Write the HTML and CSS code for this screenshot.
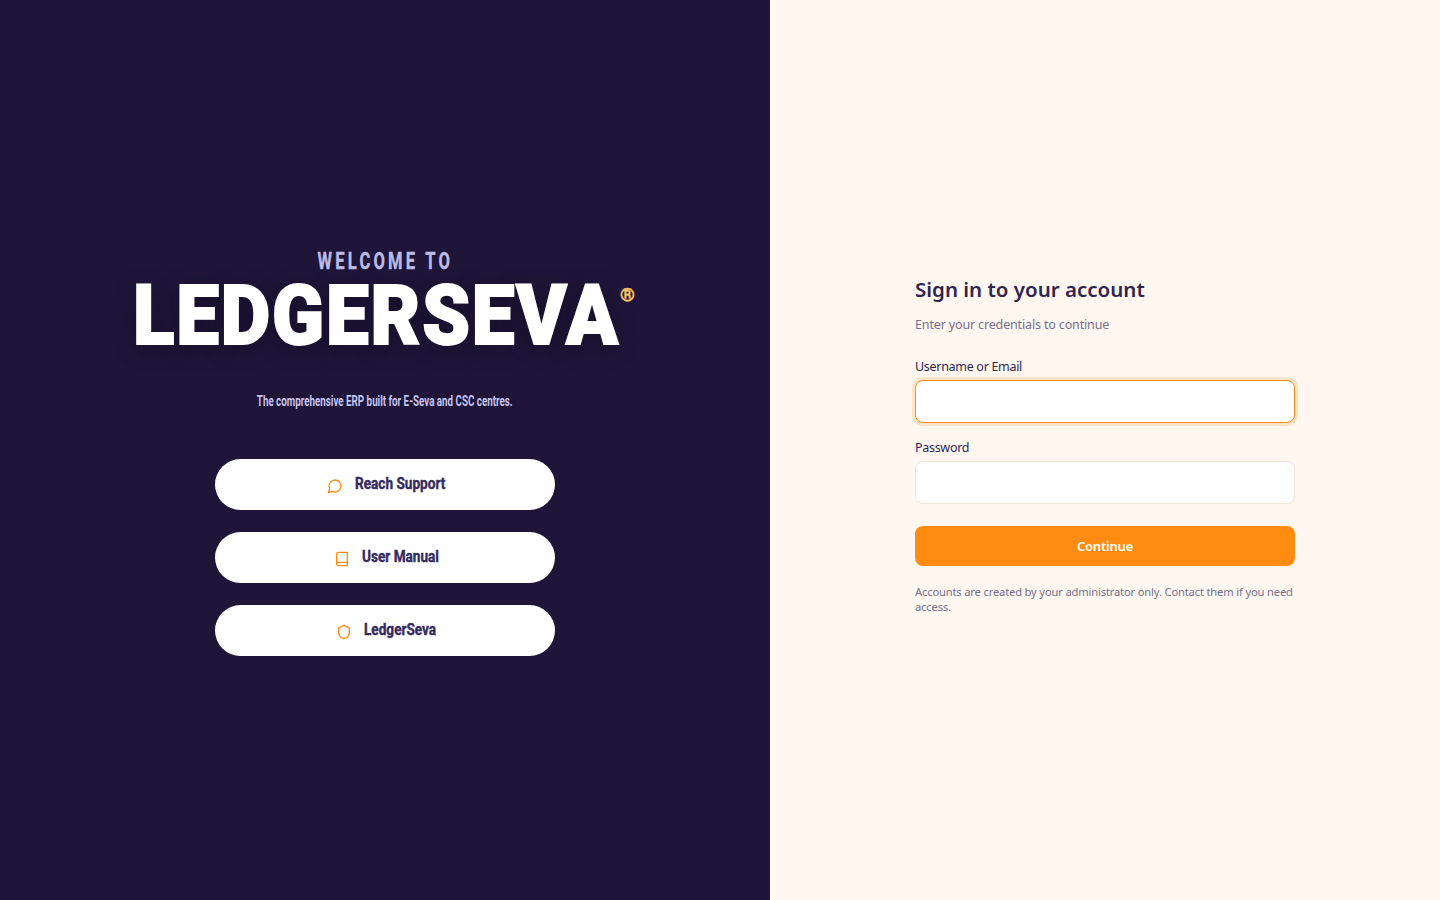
FILE: index.html
```html
<!DOCTYPE html>
<html lang="en">
<head>
    <meta charset="UTF-8">
    <meta name="viewport" content="width=device-width, initial-scale=1.0">
    <title>Sign in - LedgerSeva</title>
    <link rel="stylesheet" href="styles.css">
</head>
<body>
    <div class="brand-panel">
        <div class="welcome"><span class="squeeze">WELCOME TO</span></div>
        <div class="logo">
            <span class="logo-text">LEDGERSEVA</span>
            <span class="logo-mark">®</span>
        </div>
        <p class="tagline"><span class="squeeze">The comprehensive ERP built for E-Seva and CSC centres.</span></p>
        <div class="links">
            <a class="link-btn">
                <svg class="icon" viewBox="0 0 24 24"><path d="M7.9 20A9 9 0 1 0 4 16.1L2 22Z"/></svg>
                <span class="link-label support">Reach Support</span>
            </a>
            <a class="link-btn">
                <svg class="icon" viewBox="0 0 24 24"><path d="M4 19.500v-15A2.500 2.500 0 0 1 6.500 2H20v20H6.500a2.500 2.500 0 0 1 0-5H20"/></svg>
                <span class="link-label manual">User Manual</span>
            </a>
            <a class="link-btn">
                <svg class="icon" viewBox="0 0 24 24"><path d="M20 13c0 5-3.500 7.500-7.660 8.950a1 1 0 0 1-.67-.01C7.500 20.500 4 18 4 13V6a1 1 0 0 1 1-1c2 0 4.500-1.200 6.240-2.720a1.170 1.170 0 0 1 1.520 0C14.510 3.810 17 5 19 5a1 1 0 0 1 1 1z"/></svg>
                <span class="link-label product">LedgerSeva</span>
            </a>
        </div>
    </div>

    <div class="form-panel">
        <form class="login-form">
            <h2>Sign in to your account</h2>
            <p class="subtitle">Enter your credentials to continue</p>
            <div class="form-group">
                <label for="username">Username or Email</label>
                <input type="text" id="username" class="focused">
            </div>
            <div class="form-group">
                <label for="password">Password</label>
                <input type="password" id="password">
            </div>
            <button type="button">Continue</button>
            <p class="note">Accounts are created by your administrator only. Contact them if you need access.</p>
        </form>
    </div>
</body>
</html>
```

FILE: styles.css
```css
* {
    box-sizing: border-box;
}
body {
    margin: 0;
    display: flex;
    min-height: 100vh;
    font-family: "Noto Sans", sans-serif;
    background-color: #fff7f0;
}
.brand-panel {
    width: 770px;
    min-height: 100vh;
    padding-top: 3px;
    background-color: #1e1538;
    display: flex;
    flex-direction: column;
    align-items: center;
    justify-content: center;
}
.squeeze {
    display: inline-block;
    white-space: nowrap;
}
.welcome {
    font-family: "Roboto", sans-serif;
    font-weight: 700;
    font-size: 23px;
    line-height: 30px;
    letter-spacing: 4.500px;
    color: #bdbbe6;
    -webkit-text-stroke: 0.4px #bdbbe6;
}
.welcome .squeeze {
    transform: translateY(-1px) scaleX(0.72);
}
.logo {
    width: 500px;
    height: 76px;
    margin-bottom: 37px;
    display: flex;
    justify-content: space-between;
    align-items: flex-start;
}
.logo-text {
    display: block;
    width: 483px;
    margin-left: -2px;
    font-family: "Roboto", sans-serif;
    font-weight: 900;
    font-size: 83px;
    line-height: 76px;
    letter-spacing: 2px;
    color: #ffffff;
    white-space: nowrap;
    transform-origin: left center;
    transform: scaleX(0.92);
    -webkit-text-stroke: 2px #ffffff;
    text-shadow: 0 4px 24px rgba(0, 0, 0, 0.3);
}
.logo-mark {
    font-family: "Roboto", sans-serif;
    color: #ffc766;
    font-size: 19px;
    font-weight: 900;
    line-height: 14px;
    margin-top: 10px;
    -webkit-text-stroke: 0.5px #ffc766;
}
.tagline {
    margin: 0 0 48px;
    font-family: "Roboto", sans-serif;
    font-weight: 700;
    font-size: 14px;
    line-height: 20px;
    color: #c7c3f0;
}
.tagline .squeeze {
    transform: scaleX(0.7);
}
.links {
    display: flex;
    flex-direction: column;
    gap: 22px;
}
.link-btn {
    width: 340px;
    height: 51px;
    border-radius: 26px;
    background-color: #ffffff;
    display: flex;
    align-items: center;
    justify-content: center;
    gap: 12px;
}
.link-label {
    display: block;
    margin-bottom: 2px;
    font-family: "Roboto", sans-serif;
    font-weight: 700;
    font-size: 16px;
    color: #352a5e;
    white-space: nowrap;
    transform-origin: left center;
    transform: scaleX(0.85);
    -webkit-text-stroke: 0.4px #352a5e;
}
.support {
    width: 88px;
}
.manual {
    width: 75px;
}
.product {
    width: 71px;
}
.icon {
    width: 16px;
    height: 16px;
    margin-top: 3px;
    fill: none;
    stroke: #ff8c11;
    stroke-width: 2;
    stroke-linecap: round;
    stroke-linejoin: round;
}
.form-panel {
    flex: 1;
    display: flex;
    align-items: center;
    justify-content: center;
}
.login-form {
    width: 380px;
    padding-bottom: 14px;
}
h2 {
    margin: 0 0 10px;
    font-size: 20.500px;
    line-height: 32px;
    font-weight: 600;
    color: #2f2650;
}
.subtitle {
    margin: 0 0 22px;
    font-size: 12.500px;
    letter-spacing: -0.15px;
    line-height: 20px;
    color: #75708c;
}
.form-group {
    margin-bottom: 15px;
}
label {
    display: block;
    margin-bottom: 3px;
    font-size: 12.500px;
    letter-spacing: -0.3px;
    line-height: 20px;
    color: #2f2650;
}
input {
    display: block;
    width: 100%;
    height: 43px;
    border: 1px solid #f0e4d4;
    border-radius: 8px;
    background-color: #ffffff;
}
input.focused {
    border-color: #ff8c11;
    box-shadow: 0 0 0 3px rgba(255, 140, 17, 0.18);
}
button {
    display: block;
    width: 100%;
    height: 40px;
    margin-top: 22px;
    border: none;
    border-radius: 8px;
    background-color: #ff8c11;
    color: #ffffff;
    font-family: inherit;
    font-size: 13px;
    letter-spacing: -0.2px;
    font-weight: 600;
}
.note {
    margin: 18px 0 0;
    font-size: 11.200px;
    letter-spacing: -0.17px;
    line-height: 15px;
    color: #75708c;
}
```
